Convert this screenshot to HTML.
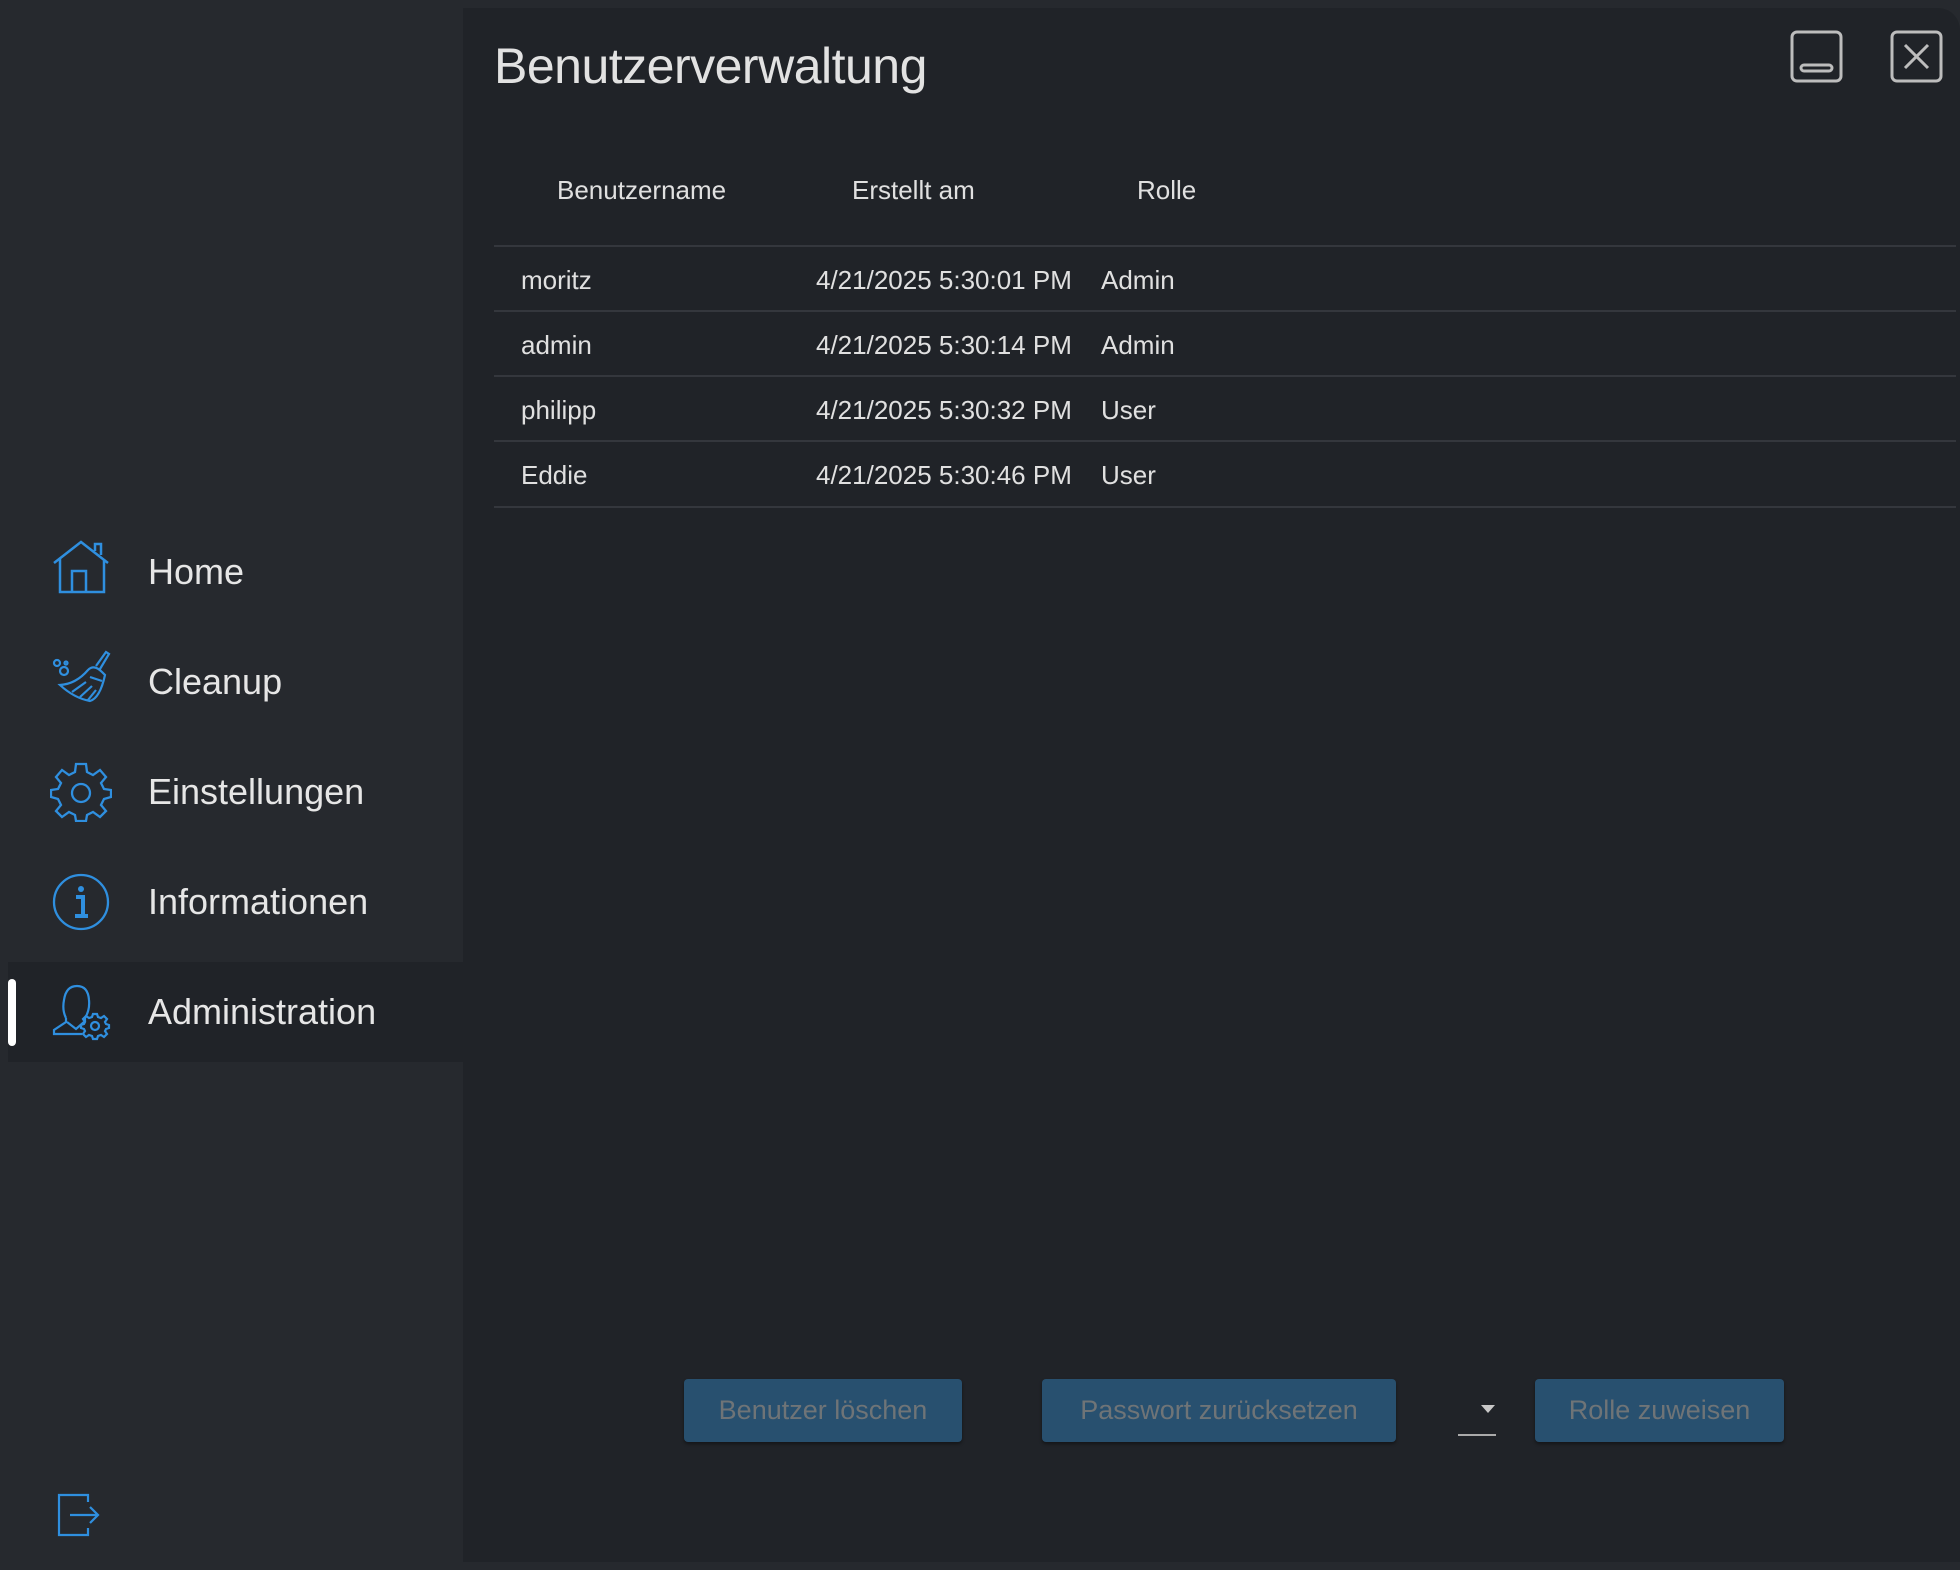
<!DOCTYPE html>
<html><head><meta charset="utf-8"><style>
html,body{margin:0;padding:0}
body{width:1960px;height:1570px;background:#26292e;position:relative;overflow:hidden;font-family:"Liberation Sans",sans-serif;color:#e4e4e4}
.abs{position:absolute}
.panel{left:463px;top:8px;width:1497px;height:1554px;background:#202328;border-top-right-radius:22px}
.nav{left:148px;font-size:36px;line-height:40px;color:#e6e6e6}
.ic{position:absolute;left:50px;width:62px;height:62px}
.hd,.cell{position:absolute;font-size:26px;line-height:30px;color:#e0e0e0;letter-spacing:0}
.line{position:absolute;left:494px;width:1462px;height:2px;background:#34373d}
.btn{position:absolute;top:1379px;height:63px;background:#28506f;border-radius:4px;color:#6f7477;font-size:27px;line-height:63px;text-align:center;box-shadow:0 2px 3px rgba(0,0,0,.4)}
</style></head><body>
<div class="abs panel"></div>
<div class="abs" style="left:8px;top:962px;width:455px;height:100px;background:#202328"></div>
<div class="abs" style="left:8px;top:979px;width:8px;height:67px;background:#fff;border-radius:4px"></div>

<svg class="ic" style="top:540px" viewBox="0 0 62 62" fill="none" stroke="#2f8fdf" stroke-width="2.5"><path d="M4 23 L31 2 L58 23 M10 19 V52 H54 V19 M22 52 V31 H36 V52 M45 11 V4 H51 V15"/></svg>
<svg class="ic" style="top:650px" viewBox="0 0 62 62" fill="none" stroke="#2f8fdf" stroke-width="2.2"><circle cx="7" cy="13" r="3"/><circle cx="14" cy="21" r="4"/><circle cx="16" cy="13" r="1.5"/><path d="M46 16 L56 2 L59 4 L50 19 M38 20 Q44 14 52 22 L55 25 Q50 48 40 51 Q24 48 10 35 Q26 34 38 20 Z M40 27 L52 31 M22 42 L36 32 M30 47 L42 36 M38 50 L46 40"/></svg>
<svg class="ic" style="top:760px" viewBox="0 0 62 62" fill="none" stroke="#2f8fdf" stroke-width="2.3"><path d="M26 4 H36 L37 12 L43 15 L50 10 L56 17 L51 23 L54 29 L61 30 V37 L54 39 L51 45 L56 51 L50 57 L43 52 L37 55 L36 61 H26 L25 55 L19 52 L12 57 L6 51 L11 45 L8 39 L1 37 V30 L8 29 L11 23 L6 17 L12 10 L19 15 L25 12 Z"/><circle cx="31" cy="33" r="9"/></svg>
<svg class="ic" style="top:870px" viewBox="0 0 62 62" fill="none" stroke="#2f8fdf" stroke-width="2.3"><circle cx="31" cy="32" r="27"/><circle cx="31" cy="19" r="3" fill="#2f8fdf" stroke="none"/><path d="M26 27 H33 V45 M25 46 H38" stroke-width="4"/></svg>
<svg class="ic" style="top:980px" viewBox="0 0 62 62" fill="none" stroke="#2f8fdf" stroke-width="2.2"><path d="M16 38 Q12 30 14 20 Q16 6 27 6 Q38 6 39 20 Q40 30 35 38 L35 42 M16 38 V42 L4 50 V54 H32"/><path d="M17 42 L26 49 L34 42"/><circle cx="45" cy="46" r="4"/><path d="M43 34 H47 L48 37 L51 38 L54 36 L57 39 L55 42 L56 44 L59 45 V48 L56 49 L55 51 L57 54 L54 57 L51 55 L48 56 L47 59 H43 L42 56 L39 55 L36 57 L33 54 L35 51 L34 49 L31 48 V45 L34 44 L35 42 L33 39 L36 36 L39 38 L42 37 Z"/></svg>

<div class="abs nav" style="top:552px">Home</div>
<div class="abs nav" style="top:662px">Cleanup</div>
<div class="abs nav" style="top:772px">Einstellungen</div>
<div class="abs nav" style="top:882px">Informationen</div>
<div class="abs nav" style="top:992px">Administration</div>

<svg class="abs" style="left:56px;top:1492px" width="46" height="46" viewBox="0 0 46 46" fill="none" stroke="#2f8fdf" stroke-width="2.2"><path d="M32 10 V3 H3 V43 H32 V36 M14 23 H42 M34 15 L42 23 L34 31"/></svg>

<div class="abs" style="left:494px;top:36px;font-size:50px;line-height:60px;color:#e2e2e2;letter-spacing:-0.5px">Benutzerverwaltung</div>

<svg class="abs" style="left:1789px;top:29px" width="58" height="58" viewBox="0 0 58 58" fill="none" stroke="#bdbdbd" stroke-width="3"><rect x="3" y="3" width="49" height="49" rx="5"/><rect x="12" y="36" width="31" height="6" rx="3"/></svg>
<svg class="abs" style="left:1889px;top:29px" width="58" height="58" viewBox="0 0 58 58" fill="none" stroke="#bdbdbd" stroke-width="3"><rect x="3" y="3" width="49" height="49" rx="5"/><path d="M16 16 L39 39 M39 16 L16 39"/></svg>

<div class="hd" style="left:557px;top:175px">Benutzername</div>
<div class="hd" style="left:852px;top:175px">Erstellt am</div>
<div class="hd" style="left:1137px;top:175px">Rolle</div>
<div class="line" style="top:245px"></div>

<div class="cell" style="left:521px;top:265px">moritz</div><div class="cell" style="left:816px;top:265px">4/21/2025 5:30:01 PM</div><div class="cell" style="left:1101px;top:265px">Admin</div>
<div class="line" style="top:310px"></div>
<div class="cell" style="left:521px;top:330px">admin</div><div class="cell" style="left:816px;top:330px">4/21/2025 5:30:14 PM</div><div class="cell" style="left:1101px;top:330px">Admin</div>
<div class="line" style="top:375px"></div>
<div class="cell" style="left:521px;top:395px">philipp</div><div class="cell" style="left:816px;top:395px">4/21/2025 5:30:32 PM</div><div class="cell" style="left:1101px;top:395px">User</div>
<div class="line" style="top:440px"></div>
<div class="cell" style="left:521px;top:460px">Eddie</div><div class="cell" style="left:816px;top:460px">4/21/2025 5:30:46 PM</div><div class="cell" style="left:1101px;top:460px">User</div>
<div class="line" style="top:506px"></div>

<div class="btn" style="left:684px;width:278px">Benutzer löschen</div>
<div class="btn" style="left:1042px;width:354px">Passwort zurücksetzen</div>
<svg class="abs" style="left:1480px;top:1404px" width="16" height="10"><path d="M1 1 H15 L8 9 Z" fill="#c8c8c8"/></svg>
<div class="abs" style="left:1458px;top:1434px;width:38px;height:2px;background:#aaa"></div>
<div class="btn" style="left:1535px;width:249px">Rolle zuweisen</div>
</body></html>
